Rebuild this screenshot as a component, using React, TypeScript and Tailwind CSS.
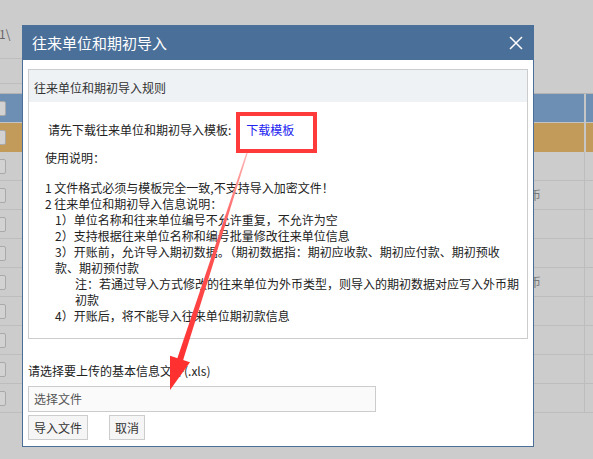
import React from "react";

const rules: { text: string; indent: number }[] = [
  { text: "1 文件格式必须与模板完全一致,不支持导入加密文件！", indent: 0 },
  { text: "2 往来单位和期初导入信息说明：", indent: 0 },
  { text: "1）单位名称和往来单位编号不允许重复，不允许为空", indent: 10 },
  { text: "2）支持根据往来单位名称和编号批量修改往来单位信息", indent: 10 },
  { text: "3）开账前，允许导入期初数据。（期初数据指：期初应收款、期初应付款、期初预收", indent: 10 },
  { text: "款、期初预付款", indent: 10 },
  { text: "注：若通过导入方式修改的往来单位为外币类型，则导入的期初数据对应写入外币期", indent: 30 },
  { text: "初款", indent: 30 },
  { text: "4）开账后，将不能导入往来单位期初款信息", indent: 10 },
];

function Checkbox() {
  return <div className="ml-[-8px] h-[15px] w-[14px] shrink-0 rounded-[2px] border border-[#a9a9a9] bg-[#d2d2d2]" />;
}

function BackgroundPage() {
  const rows = Array.from({ length: 9 }, (_, i) => i);
  return (
    <div className="flex flex-col">
      <div className="flex h-[59px] w-[300px] items-center border-b border-[#bdbdbd] pt-[10px] text-[12px] text-[#666]">
        <span className="ml-[-1px]">1\</span>
      </div>
      <div className="h-[25px] w-[300px] border-b border-[#bdbdbd]" />
      <div className="h-[9px]" />
      <div className="border-t border-[#b3b3b3]">
        <div className="flex h-[29px] items-center border-b border-[#c4c4c4] bg-[#6d8fb3]">
          <Checkbox />
          <div className="flex-1" />
          <div className="h-full w-[9px] border-l-2 border-[#c6c6c6]" />
        </div>
        <div className="flex h-[29px] items-center bg-[#c29a59]">
          <Checkbox />
          <div className="flex-1" />
          <div className="h-full w-[9px] border-l-2 border-[#c6c6c6]" />
        </div>
        {rows.map((i) => (
          <div key={i} className="flex h-[29px] items-center border-b border-[#bdbdbd]">
            <Checkbox />
            <div className="flex-1 pr-[43px] text-right text-[12px] text-[#7a7a7a]">
              {i === 1 || i === 4 ? "外币" : ""}
            </div>
            <div className="h-full w-[9px] border-l border-[#bdbdbd]" />
          </div>
        ))}
      </div>
    </div>
  );
}

function ImportDialog() {
  return (
    <div className="absolute left-[22px] top-[25px] flex h-[422px] w-[512px] flex-col border-x border-b border-[#4a6f99] bg-white">
      <div className="flex h-[35px] shrink-0 items-center justify-between bg-[#4a6f99] pl-[9px] pr-[9px]">
        <span className="text-[15px] leading-[20px] text-white">往来单位和期初导入</span>
        <svg width="14" height="14" viewBox="0 0 14 14" className="mr-[1px]">
          <path d="M1 1L13 13M13 1L1 13" stroke="#ffffff" strokeWidth="1.5" fill="none" />
        </svg>
      </div>
      <div className="flex flex-col px-[5px] pt-[9px]">
        <div className="h-[270px] border border-[#cccccc]">
          <div className="h-[32px] bg-[#eef2f5] pl-[5px] pt-[10px] text-[12px] leading-[16px] text-[#333]">
            往来单位和期初导入规则
          </div>
          <div className="pl-[16px] pt-[20px] text-[12px] leading-[16px] text-[#222]">
            <div className="ml-[3px] whitespace-nowrap">
              请先下载往来单位和期初导入模板:
              <span className="ml-[15px] text-[#2323f0]">下载模板</span>
            </div>
            <div className="mt-[12px] whitespace-nowrap">使用说明：</div>
            <div className="mt-[14px]">
              {rules.map((r, i) => (
                <div key={i} className="whitespace-nowrap" style={{ paddingLeft: r.indent }}>
                  {r.text}
                </div>
              ))}
            </div>
          </div>
        </div>
        <div className="mt-[24px] whitespace-nowrap text-[12px] leading-[16px] text-[#222]">
          请选择要上传的基本信息文件(.xls)
        </div>
        <div className="mt-[7px] flex h-[26px] w-[348px] items-center border border-[#cccccc] bg-[#fafafa] pl-[5px] text-[12px] text-[#555]">
          选择文件
        </div>
        <div className="mt-[3px] flex gap-[21px]">
          <button className="h-[25px] w-[60px] border border-[#cccccc] bg-[#f5f5f5] text-[12px] text-[#333]">导入文件</button>
          <button className="h-[25px] w-[36px] border border-[#cccccc] bg-[#f5f5f5] text-[12px] text-[#333]">取消</button>
        </div>
      </div>
    </div>
  );
}

function Annotations() {
  return (
    <>
      <div className="absolute left-[236px] top-[112px] h-[41px] w-[81px] border-4 border-[#ff3a3a]" />
      <svg className="pointer-events-none absolute left-0 top-0" width="593" height="459">
        <defs>
          <linearGradient id="shaft" x1="247" y1="153" x2="179" y2="362" gradientUnits="userSpaceOnUse">
            <stop offset="0" stopColor="#ffb4b4" />
            <stop offset="0.35" stopColor="#ff5c5c" />
            <stop offset="1" stopColor="#ff3030" />
          </linearGradient>
        </defs>
        <polygon points="247.6,153.2 246.4,152.8 177.2,358.7 183.0,360.6" fill="url(#shaft)" />
        <polygon points="170,390 170.0,355.7 190.0,362.3" fill="#ff3030" />
      </svg>
    </>
  );
}

export default function App() {
  return (
    <div className="relative h-[459px] w-[593px] overflow-hidden bg-[#cccccc] font-['Noto_Sans_CJK_SC','Noto_Sans',sans-serif]">
      <BackgroundPage />
      <ImportDialog />
      <Annotations />
    </div>
  );
}
